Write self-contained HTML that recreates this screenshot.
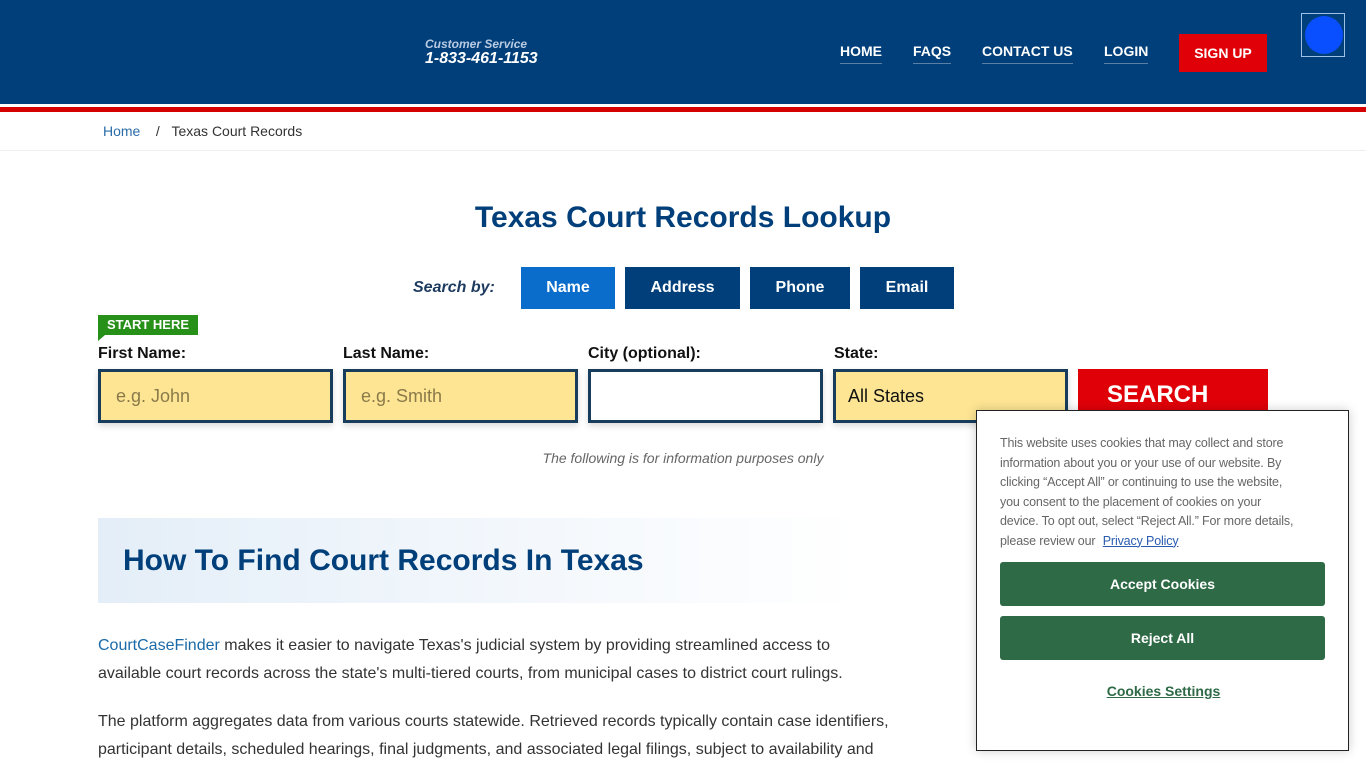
<!DOCTYPE html>
<html><head><meta charset="utf-8"><style>
*{box-sizing:border-box;margin:0;padding:0}
body{width:1366px;height:768px;overflow:hidden;font-family:"Liberation Sans",Arial,sans-serif;background:#fff;position:relative}
.hdr{position:absolute;left:0;top:0;width:1366px;height:104px;background:#003f7a}
.w1{position:absolute;top:104px;left:0;width:1366px;height:3px;background:#fff}
.r1{position:absolute;top:107px;left:0;width:1366px;height:5px;background:#d50000}
.cs{position:absolute;left:425px;top:37px;color:#b9cbe3;font-style:italic;font-weight:bold;font-size:12px}
.ph{position:absolute;left:425px;top:50px;color:#fff;font-style:italic;font-weight:bold;font-size:16px}
.nav a{position:absolute;top:43px;color:#fff;font-weight:bold;font-size:14px;text-decoration:none;padding-bottom:4px;border-bottom:1px solid #5c7fa6}
.su{position:absolute;left:1179px;top:34px;width:88px;height:38px;background:#e00008;color:#fff;font-weight:bold;font-size:14px;text-align:center;line-height:38px}
.img{position:absolute;left:1301px;top:13px;width:44px;height:44px;border:1px solid #9cc0e6}
.img div{position:absolute;left:3px;top:2px;width:38px;height:38px;border-radius:50%;background:#0a4fff}
.bc{position:absolute;top:123px;left:103px;font-size:14px;color:#333}
.bc a{color:#2a6ca8;text-decoration:none}
.bl{position:absolute;top:150px;left:0;width:1366px;height:1px;background:#eee}
h1{position:absolute;top:201px;left:0;width:1366px;text-align:center;color:#003f7a;font-size:30px}
.sb{position:absolute;top:279px;left:413px;color:#1d3b5f;font-style:italic;font-weight:bold;font-size:16px}
.tab{position:absolute;top:267px;height:42px;background:#003f7a;color:#fff;font-weight:bold;font-size:16px;text-align:center;line-height:42px}
.st{position:absolute;left:98px;top:315px;width:100px;height:20px;background:#279018;color:#fff;font-weight:bold;font-size:13px;text-align:center;line-height:19px}
.st:after{content:"";position:absolute;left:0;bottom:-6px;border-left:7px solid #279018;border-bottom:6px solid transparent}
.lb{position:absolute;top:345px;font-weight:bold;font-size:16px;color:#111}
.in{position:absolute;top:369px;width:235px;height:54px;background:#fde593;border:3px solid #173c5c;font-size:18px;color:#8a7a4a;padding-left:15px;line-height:48px;box-shadow:0 3px 6px rgba(0,0,0,.15)}
.srch{position:absolute;left:1078px;top:369px;width:190px;height:54px;background:#e00008;color:#fff;font-weight:bold;font-size:24px;padding-left:29px;line-height:52px}
.info{position:absolute;top:450px;left:0;width:1366px;text-align:center;font-style:italic;color:#666;font-size:14px}
.hb{position:absolute;left:98px;top:518px;width:760px;height:85px;background:linear-gradient(90deg,#e4eef8,#fff)}
.hb h2{position:absolute;left:25px;top:26px;color:#003f7a;font-size:30px}
p{position:absolute;left:98px;width:860px;font-size:16px;line-height:28px;color:#333;white-space:nowrap}
p a{color:#1a6aa8}
.ck{position:absolute;left:976px;top:410px;width:373px;height:341px;background:#fff;border:1px solid #222;box-shadow:0 0 10px rgba(0,0,0,.2)}
.ck .t{position:absolute;left:23px;top:23px;width:340px;font-size:12.5px;letter-spacing:-0.15px;line-height:19.5px;color:#666;white-space:nowrap}
.ck .t a{color:#2a5bb0;margin-left:4px;text-decoration:underline}
.gb{position:absolute;left:23px;width:325px;height:44px;background:#2e6a46;border-radius:3px;color:#fff;font-weight:bold;font-size:14px;text-align:center;line-height:44px}
.cset{position:absolute;top:272px;left:0;width:373px;text-align:center;color:#2e6a46;font-weight:bold;font-size:14px;text-decoration:underline}
</style></head><body>
<div class="hdr"></div><div class="w1"></div><div class="r1"></div>
<div class="cs">Customer Service</div><div class="ph">1-833-461-1153</div>
<div class="nav"><a style="left:840px">HOME</a><a style="left:913px">FAQS</a><a style="left:982px">CONTACT US</a><a style="left:1104px">LOGIN</a></div>
<div class="su">SIGN UP</div>
<div class="img"><div></div></div>
<div class="bc"><a>Home</a>&nbsp;&nbsp;&nbsp; / &nbsp;&nbsp;Texas Court Records</div>
<div class="bl"></div>
<h1>Texas Court Records Lookup</h1>
<div class="sb">Search by:</div>
<div class="tab" style="left:521px;width:94px;background:#0a6dcc">Name</div>
<div class="tab" style="left:625px;width:115px">Address</div>
<div class="tab" style="left:750px;width:100px">Phone</div>
<div class="tab" style="left:860px;width:94px">Email</div>
<div class="st">START HERE</div>
<div class="lb" style="left:98px">First Name:</div>
<div class="lb" style="left:343px">Last Name:</div>
<div class="lb" style="left:588px">City (optional):</div>
<div class="lb" style="left:834px">State:</div>
<div class="in" style="left:98px">e.g. John</div>
<div class="in" style="left:343px">e.g. Smith</div>
<div class="in" style="left:588px;background:#fff"></div>
<div class="in" style="left:833px;color:#111;padding-left:12px">All States</div>
<div class="srch">SEARCH</div>
<div class="info">The following is for information purposes only</div>
<div class="hb"><h2>How To Find Court Records In Texas</h2></div>
<p style="top:632px"><a>CourtCaseFinder</a> makes it easier to navigate Texas's judicial system by providing streamlined access to<br>available court records across the state's multi-tiered courts, from municipal cases to district court rulings.</p>
<p style="top:708px">The platform aggregates data from various courts statewide. Retrieved records typically contain case identifiers,<br>participant details, scheduled hearings, final judgments, and associated legal filings, subject to availability and</p>
<div class="ck">
<div class="t">This website uses cookies that may collect and store<br>information about you or your use of our website. By<br>clicking “Accept All” or continuing to use the website,<br>you consent to the placement of cookies on your<br>device. To opt out, select “Reject All.” For more details,<br>please review our <a>Privacy Policy</a></div>
<div class="gb" style="top:151px">Accept Cookies</div>
<div class="gb" style="top:205px">Reject All</div>
<div class="cset">Cookies Settings</div>
</div>
</body></html>
